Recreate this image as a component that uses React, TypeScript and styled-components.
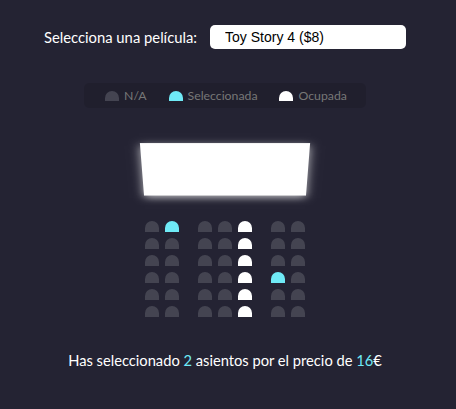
import React from "react";
import styled, { createGlobalStyle } from "styled-components";

const GlobalStyle = createGlobalStyle`
  * { box-sizing: border-box; }
  body {
    margin: 0;
    background-color: #242333;
    color: #fff;
    font-family: Lato, "Noto Sans", sans-serif;
  }
`;

const Page = styled.div`
  display: flex;
  flex-direction: column;
  align-items: center;
  width: 450px;
  padding-top: 25px;
`;

const MovieContainer = styled.div`
  display: flex;
  align-items: center;
  gap: 13px;
  font-size: 14.8px;
`;

const MovieSelect = styled.select`
  appearance: none;
  background: #fff;
  border: 0;
  border-radius: 5px;
  font-family: "Liberation Sans", Arial, sans-serif;
  font-size: 14px;
  color: #000;
  padding: 0 15px;
  height: 24px;
  width: 196px;
  outline: none;
`;

const Showcase = styled.ul`
  display: flex;
  justify-content: space-between;
  list-style-type: none;
  margin: 34px 0 0;
  padding: 0 10px;
  height: 25px;
  width: 282px;
  background: rgba(0, 0, 0, 0.1);
  border-radius: 5px;
  color: #777;
`;

const ShowcaseItem = styled.li`
  display: flex;
  align-items: center;
  margin: 0 9px 0 11px;

  small {
    margin-left: 5px;
    font-size: 12.3px;
  }
`;

type SeatState = "free" | "selected" | "occupied";

const seatColors: Record<SeatState, string> = {
  free: "#444451",
  selected: "#6feaf6",
  occupied: "#fff",
};

const Seat = styled.div<{ $state: SeatState; $legend?: boolean }>`
  background-color: ${({ $state }) => seatColors[$state]};
  width: 14px;
  height: ${({ $legend }) => ($legend ? "10px" : "11px")};
  margin: ${({ $legend }) => ($legend ? "0" : "3px")};
  border-top-left-radius: 10px;
  border-top-right-radius: 10px;

  &:nth-of-type(2) {
    margin-right: ${({ $legend }) => ($legend ? "0" : "16px")};
  }
  &:nth-of-type(6) {
    margin-left: ${({ $legend }) => ($legend ? "0" : "16px")};
  }
`;

const Container = styled.div`
  perspective: 1000px;
  margin-top: 27px;
`;

const Screen = styled.div`
  background-color: #fff;
  height: 70px;
  width: 100%;
  margin: 0 0 13px;
  transform: rotateX(-45deg);
  box-shadow: 0 3px 10px rgba(255, 255, 255, 0.7);
`;

const Row = styled.div`
  display: flex;
`;

const Text = styled.p`
  margin: 31px 0 0;
  font-size: 14.7px;
  line-height: 19px;

  span {
    color: #6feaf6;
  }
`;

const ROWS = 6;
const COLS = 7;
const selected = ["0-1", "3-5"];

const seatState = (r: number, c: number): SeatState => {
  if (c === 4) return "occupied";
  if (selected.includes(`${r}-${c}`)) return "selected";
  return "free";
};

export default function App() {
  return (
    <>
      <GlobalStyle />
      <Page>
        <MovieContainer>
          <label>Selecciona una película:</label>
          <MovieSelect defaultValue="8">
            <option value="10">Avengers: Endgame ($10)</option>
            <option value="12">Joker ($12)</option>
            <option value="8">Toy Story 4 ($8)</option>
            <option value="9">The Lion King ($9)</option>
          </MovieSelect>
        </MovieContainer>

        <Showcase>
          <ShowcaseItem>
            <Seat $state="free" $legend />
            <small>N/A</small>
          </ShowcaseItem>
          <ShowcaseItem>
            <Seat $state="selected" $legend />
            <small>Seleccionada</small>
          </ShowcaseItem>
          <ShowcaseItem>
            <Seat $state="occupied" $legend />
            <small>Ocupada</small>
          </ShowcaseItem>
        </Showcase>

        <Container>
          <Screen />
          {Array.from({ length: ROWS }, (_, r) => (
            <Row key={r}>
              {Array.from({ length: COLS }, (_, c) => (
                <Seat key={c} $state={seatState(r, c)} />
              ))}
            </Row>
          ))}
        </Container>

        <Text>
          Has seleccionado <span>2</span> asientos por el precio de <span>16</span>€
        </Text>
      </Page>
    </>
  );
}
